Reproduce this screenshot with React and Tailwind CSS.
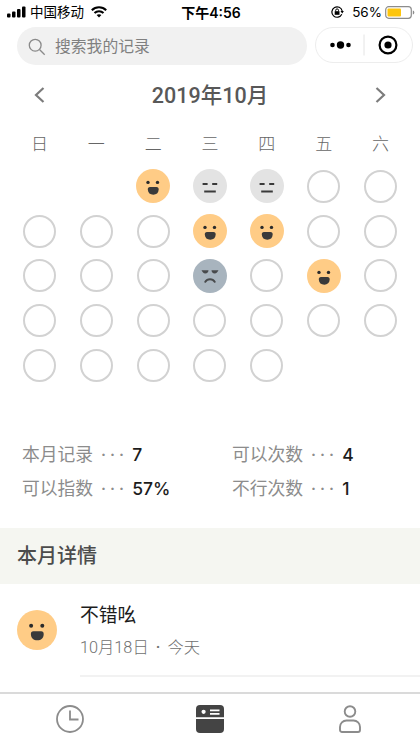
const WEEKDAYS = ["日", "一", "二", "三", "四", "五", "六"];

// null leaves the cell blank, "none" is a day without a record
const DAYS = [
    null, null, "good", "meh", "meh", "none", "none",
    "none", "none", "none", "good", "good", "none", "none",
    "none", "none", "none", "bad", "none", "good", "none",
    "none", "none", "none", "none", "none", "none", "none",
    "none", "none", "none", "none", "none", null, null,
];

const STATS = [
    { label: "本月记录", value: "7" },
    { label: "可以次数", value: "4" },
    { label: "可以指数", value: "57%" },
    { label: "不行次数", value: "1" },
];

function Face({ mood, className }) {
    if (mood === "good") {
        return (
            <svg viewBox="0 0 34 34" className={className}>
                <circle cx="17" cy="17" r="17" fill="#ffcc86" />
                <circle cx="12" cy="13.4" r="1.7" fill="#2b2b2b" />
                <circle cx="21.5" cy="13.4" r="1.7" fill="#2b2b2b" />
                <path d="M14 18h6.500c1.500 0 2.300 1 2.200 2.600-.2 3.400-2.200 5.200-5.400 5.200s-5.300-1.800-5.500-5.200c-.1-1.600.7-2.600 2.200-2.600z" fill="#3a3a3a" />
            </svg>
        );
    }
    if (mood === "meh") {
        return (
            <svg viewBox="0 0 34 34" className={className}>
                <circle cx="17" cy="17" r="17" fill="#e3e3e3" />
                <path d="M9.600 15h5M19.200 15h5M11.200 22.600h11.600" stroke="#3a3a3a" strokeWidth="2" fill="none" />
            </svg>
        );
    }
    return (
        <svg viewBox="0 0 34 34" className={className}>
            <circle cx="17" cy="17" r="17" fill="#a8b4be" />
            <path d="M8.500 11.300h7c0 1.900-1.200 3.200-3.200 3.200s-2.700-1.300-3.800-3.200zM25.500 11.300h-7c0 1.900 1.200 3.200 3.200 3.200s2.700-1.300 3.800-3.200z" fill="#484a4c" />
            <path d="M12.300 22.800c2-3.400 7.400-3.400 9.400 0" stroke="#484a4c" strokeWidth="2" fill="none" strokeLinecap="round" />
        </svg>
    );
}

function StatusBar() {
    return (
        <div className="grid h-6 grid-cols-3 items-center pr-[5px] pl-[7px] text-black">
            <div className="flex items-center">
                <svg width="19" height="12" viewBox="0 0 19 12">
                    <rect x="0" y="7.500" width="3.500" height="4" rx="1" />
                    <rect x="5" y="5.500" width="3.500" height="6" rx="1" />
                    <rect x="10" y="3" width="3.500" height="8.500" rx="1" />
                    <rect x="15" y="0.500" width="3.500" height="11" rx="1" />
                </svg>
                <span className="ml-[4px] text-[13.5px]">中国移动</span>
                <svg className="ml-[7px]" width="16" height="12" viewBox="0 0 16 12" fill="none" stroke="#000" strokeWidth="2.100">
                    <path d="M.8 4.200c4-3.900 10.400-3.900 14.400 0" />
                    <path d="M3.500 7c2.500-2.400 6.500-2.400 9 0" />
                    <path d="M8 11.500 5.600 9.100c1.400-1.200 3.400-1.200 4.800 0z" fill="#000" stroke="none" />
                </svg>
            </div>
            <div className="text-center text-[14px] font-semibold">下午4:56</div>
            <div className="flex items-center justify-end">
                <svg width="13" height="12" viewBox="0 0 13 12" fill="none" stroke="#000" strokeWidth="1.200">
                    <path d="M10.800 8.300a5.200 5.200 0 1 1 .4-3.300" />
                    <path d="M9.500 5h3.400l-1.700 2.400z" fill="#000" stroke="none" />
                    <rect x="3.700" y="5.200" width="4.800" height="3.600" fill="#000" stroke="none" />
                    <path d="M4.700 5.400V4.300a1.400 1.400 0 0 1 2.800 0v1.100" strokeWidth="1" />
                </svg>
                <span className="ml-[8px] text-[13.5px]">56%</span>
                <svg className="ml-[3px]" width="30" height="13" viewBox="0 0 30 13">
                    <rect x="0.700" y="0.700" width="25.600" height="11.600" rx="3" fill="#fff" stroke="#8c8c8c" strokeWidth="1.200" />
                    <rect x="2.500" y="2.500" width="13.500" height="8" rx="1" fill="#fdc50c" />
                    <path d="M27.800 4.500c2 .5 2 3.500 0 4z" fill="#8c8c8c" />
                </svg>
            </div>
        </div>
    );
}

function SearchBar() {
    return (
        <div className="flex h-[41px] items-start pt-[3px] pr-[7px] pl-[17px]">
            <div className="flex h-[38px] w-[290px] items-center rounded-full bg-[#f1f1f1] pl-[11px] text-[#808080]">
                <svg className="mt-[2px]" width="18" height="18" viewBox="0 0 18 18" fill="none" stroke="#8a8a8a" strokeWidth="1.300">
                    <circle cx="7.200" cy="7.200" r="5.900" />
                    <path d="m11.500 11.500 5.200 5.200" />
                </svg>
                <span className="ml-[9px] pt-[2px] text-[15.8px]">搜索我的记录</span>
            </div>
            <div className="ml-[8px] flex h-[36px] w-[98px] items-center rounded-full border border-[#ededed]">
                <svg width="96" height="34" viewBox="0 0 96 34">
                    <circle cx="16.500" cy="17" r="2.300" />
                    <circle cx="24.500" cy="17" r="3.700" />
                    <circle cx="32.500" cy="17" r="2.300" />
                    <path d="M48 6.500v21" stroke="#e4e4e4" />
                    <circle cx="72" cy="17" r="8.400" fill="none" stroke="#000" strokeWidth="2.200" />
                    <circle cx="72" cy="17" r="3.600" />
                </svg>
            </div>
        </div>
    );
}

function Calendar() {
    return (
        <section className="h-[365px] px-[11px]">
            <div className="flex h-[60px] items-center justify-between px-[23px]">
                <svg width="11" height="16" viewBox="0 0 11 16" fill="none" stroke="#7c7c7c" strokeWidth="2.200">
                    <path d="M9.500 1 2 8l7.500 7" />
                </svg>
                <h1 className="pt-[3px] font-['Roboto','Noto_Sans_CJK_SC',sans-serif] text-[21.5px] font-medium text-[#585858]">2019年10月</h1>
                <svg width="11" height="16" viewBox="0 0 11 16" fill="none" stroke="#7c7c7c" strokeWidth="2.200">
                    <path d="M1.500 1 9 8l-7.500 7" />
                </svg>
            </div>
            <div className="grid h-[38px] grid-cols-7 items-center pt-[2px] text-center text-[17px] font-light text-[#666]">
                {WEEKDAYS.map((day) => (
                    <span key={day}>{day}</span>
                ))}
            </div>
            <div className="grid auto-rows-[44.8px] grid-cols-7 place-items-center pt-px">
                {DAYS.map((mood, i) => (
                    <div key={i} className="grid size-[34px] place-items-center">
                        {mood === "none" && <div className="size-[33px] rounded-full border-2 border-[#d2d2d2]" />}
                        {mood && mood !== "none" && <Face mood={mood} className="size-full" />}
                    </div>
                ))}
            </div>
        </section>
    );
}

function Stats() {
    return (
        <section className="grid h-[98px] auto-rows-[34px] grid-cols-2 items-center pt-[8px] pl-[22px] text-[17.8px]">
            {STATS.map(({ label, value }, i) => (
                <div key={label} className={i % 2 ? "flex items-center pl-[11px]" : "flex items-center"}>
                    <span className="text-[#8c8c8c]">{label}</span>
                    <span className="ml-[6px] grid w-[27px] grid-cols-3 justify-items-center font-['Roboto',sans-serif] font-medium text-[#8c8c8c]">
                        <span>·</span>
                        <span>·</span>
                        <span>·</span>
                    </span>
                    <span className="ml-[6px] text-[17.5px] font-medium text-[#1c1c1c]">{value}</span>
                </div>
            ))}
        </section>
    );
}

function TabBar() {
    return (
        <nav className="grid h-[55px] grid-cols-3 place-items-center border-t-2 border-[#dadada] bg-white pb-[3px]">
            <svg width="28" height="28" viewBox="0 0 28 28" fill="none" stroke="#8c8c8c" strokeWidth="1.800">
                <circle cx="14" cy="14" r="13" />
                <path d="M14 5.500v9h8.500" />
            </svg>
            <svg width="28" height="28" viewBox="0 0 28 28">
                <path d="M4 0h20a4 4 0 0 1 4 4v8.200H0V4a4 4 0 0 1 4-4z" fill="#444" />
                <path d="M0 14h28v10a4 4 0 0 1-4 4H4a4 4 0 0 1-4-4z" fill="#444" />
                <circle cx="7.600" cy="6.800" r="2.100" fill="#fff" />
                <path d="M14 5.400h9.500M14 8.900h9.500" stroke="#fff" strokeWidth="1.800" />
            </svg>
            <svg width="22" height="28" viewBox="0 0 22 28" fill="none" stroke="#8c8c8c" strokeWidth="1.900">
                <circle cx="11" cy="6.500" r="5.300" />
                <path d="M7.500 15.500h7a6.500 6.500 0 0 1 6.500 6.500v3a2 2 0 0 1-2 2H3a2 2 0 0 1-2-2v-3a6.500 6.500 0 0 1 6.500-6.500z" />
            </svg>
        </nav>
    );
}

export default function App() {
    return (
        <div className="flex h-[747px] w-[420px] flex-col overflow-hidden bg-white font-['Inter','Noto_Sans_CJK_SC',sans-serif] whitespace-nowrap">
            <StatusBar />
            <SearchBar />
            <Calendar />
            <Stats />
            <h2 className="flex h-[56px] items-center bg-[#f5f6f1] pl-[17px] text-[20px] font-medium text-[#4c4c4c]">
                本月详情
            </h2>
            <div className="flex h-[108px] pl-[17px]">
                <Face mood="good" className="mt-[26px] size-[40px]" />
                <div className="ml-[23px] h-[93px] flex-1 border-b-2 border-[#f2f2f2] pt-[17px] font-['Roboto','Noto_Sans_CJK_SC',sans-serif]">
                    <p className="text-[18.8px] leading-[30px] text-[#1c1c1c]">不错吆</p>
                    <p className="mt-[2px] text-[16.3px] leading-[30px] font-light text-[#707070]">
                        10月18日<span className="mx-[3px] font-medium"> · </span>今天
                    </p>
                </div>
            </div>
            <TabBar />
        </div>
    );
}
